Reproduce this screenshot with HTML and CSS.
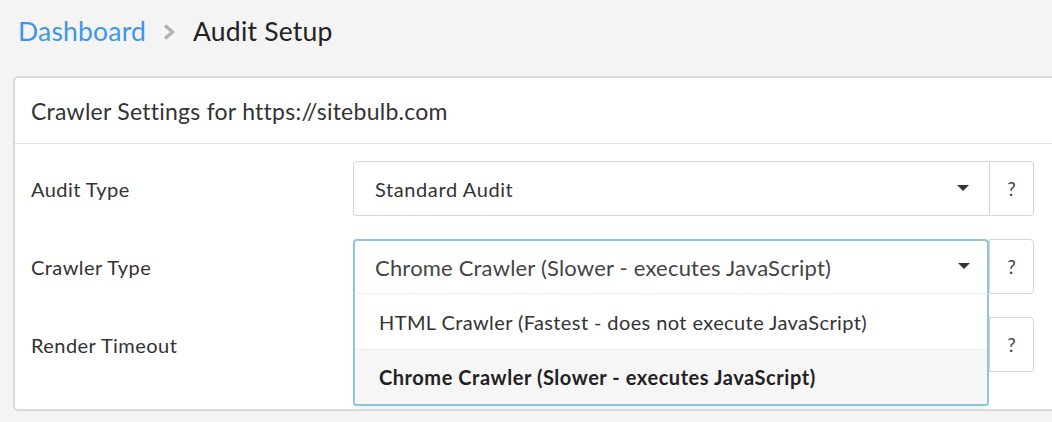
FILE: index.html
```html
<!DOCTYPE html>
<html>
<head>
<meta charset="utf-8">
<link rel="stylesheet" href="styles.css">
</head>
<body>
<div class="page">
  <nav class="crumbs">
    <a class="crumb-link" href="#">Dashboard</a>
    <svg class="crumb-sep" width="14" height="18" viewBox="0 0 14 18"><path d="M3 2.5 L10.5 9 L3 15.5" fill="none" stroke="#b3b3b3" stroke-width="3.4"/></svg>
    <span class="crumb-current">Audit Setup</span>
  </nav>
  <section class="card">
    <header class="card-head">Crawler Settings for https://sitebulb.com</header>
    <div class="card-body">
      <div class="row">
        <div class="label">Audit Type</div>
        <div class="control">
          <div class="select">
            <span class="value">Standard Audit</span>
            <span class="caret"></span>
          </div>
          <div class="help">?</div>
        </div>
      </div>
      <div class="row">
        <div class="label">Crawler Type</div>
        <div class="control">
          <div class="select-wrap">
            <div class="select open">
              <span class="value">Chrome Crawler (Slower - executes JavaScript)</span>
              <span class="caret"></span>
            </div>
            <ul class="menu">
              <li class="option">HTML Crawler (Fastest - does not execute JavaScript)</li>
              <li class="option selected">Chrome Crawler (Slower - executes JavaScript)</li>
            </ul>
          </div>
          <div class="help">?</div>
        </div>
      </div>
      <div class="row">
        <div class="label">Render Timeout</div>
        <div class="control">
          <div class="select">
            <span class="value">5 seconds</span>
            <span class="caret"></span>
          </div>
          <div class="help">?</div>
        </div>
      </div>
    </div>
  </section>
</div>
</body>
</html>
```

FILE: styles.css
```css
html, body {
  margin: 0;
  padding: 0;
  background: #f4f4f4;
  overflow: hidden;
}
body {
  font-family: Lato, "Open Sans", sans-serif;
  color: #333;
}
.page {
  width: 1052px;
  height: 422px;
  overflow: hidden;
}
.crumbs {
  height: 62px;
  display: flex;
  align-items: center;
  padding-left: 18px;
  font-size: 26.5px;
  letter-spacing: 0.2px;
}
.crumb-link {
  color: #3d97e6;
  text-decoration: none;
}
.crumb-sep {
  margin: 2px 17px 0 16px;
}
.crumb-current {
  color: #222;
}
.card {
  margin: 14px 0 0 13px;
  width: 1060px;
  background: #fff;
  border: 2px solid #d9d9d9;
  border-radius: 5px;
  box-sizing: border-box;
  height: 335px;
}
.card-head {
  height: 65px;
  display: flex;
  align-items: center;
  padding-left: 16px;
  font-size: 23px;
  letter-spacing: 0.25px;
  color: #333;
  border-bottom: 1px solid #e2e2e2;
}
.card-body {
  padding: 17px 0 0 16px;
  display: flex;
  flex-direction: column;
  gap: 23px;
}
.row {
  display: flex;
  align-items: center;
  height: 55px;
}
.label {
  width: 322px;
  font-size: 20px;
  letter-spacing: 0.45px;
  color: #333;
}
.control {
  display: flex;
  height: 55px;
}
.select-wrap {
  position: relative;
  width: 636px;
  height: 55px;
}
.select {
  width: 636px;
  height: 55px;
  box-sizing: border-box;
  border: 1px solid #d6d6d6;
  border-right: none;
  border-radius: 4px 0 0 4px;
  display: flex;
  align-items: center;
  padding: 0 20px 0 21px;
  font-size: 20px;
  letter-spacing: 0.6px;
  color: #333;
  background: #fff;
}
.select .value {
  flex: 1;
}
.caret {
  width: 0;
  height: 0;
  border-left: 6px solid transparent;
  border-right: 6px solid transparent;
  border-top: 6px solid #333;
  margin-top: -2px;
}
.select.open {
  border: 2px solid #8cc7d8;
  border-bottom: 1px solid #eeeeee;
  border-radius: 4px 4px 0 0;
  padding-left: 20px;
  padding-right: 17px;
  font-size: 22px;
  letter-spacing: 0.2px;
  color: #444;
  position: relative;
  z-index: 3;
}
.menu {
  position: absolute;
  z-index: 3;
  top: 55px;
  left: 0;
  width: 636px;
  box-sizing: border-box;
  margin: 0;
  padding: 0;
  list-style: none;
  background: #fff;
  border: 2px solid #8cc7d8;
  border-top: none;
  border-radius: 0 0 4px 4px;
  box-shadow: 0 2px 3px rgba(0,0,0,0.06);
  overflow: hidden;
}
.option {
  height: 55px;
  display: flex;
  align-items: center;
  padding-left: 24px;
  font-size: 20px;
  letter-spacing: 0.4px;
  color: #333;
}
.option + .option {
  border-top: 1px solid #f0f0f0;
  height: 54px;
}
.option.selected {
  background: #f6f6f6;
  font-weight: bold;
  letter-spacing: 0.55px;
  color: #222;
}
.help {
  width: 45px;
  height: 55px;
  box-sizing: border-box;
  border: 1px solid #d6d6d6;
  border-radius: 0 4px 4px 0;
  display: flex;
  align-items: center;
  justify-content: center;
  font-size: 19px;
  color: #444;
  background: #fff;
}
```
